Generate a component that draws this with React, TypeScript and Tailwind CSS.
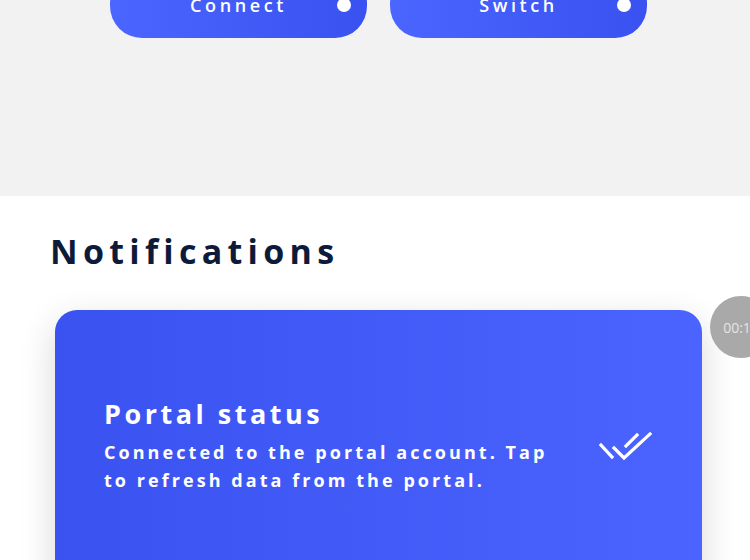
import React from "react";

const font = { fontFamily: '"Open Sans", "Noto Sans", sans-serif' };

const PillButton = ({ label }: { label: string }) => (
  <button className="relative flex h-[66px] w-[257px] items-center justify-center rounded-[32px] bg-linear-to-r from-[#4b66ff] to-[#3951f0] text-[18px] font-semibold tracking-[0.2em] text-white">
    {label}
    <span className="absolute right-[16px] top-1/2 h-[14px] w-[14px] -translate-y-1/2 rounded-full bg-white" />
  </button>
);

const DoubleCheck = () => (
  <svg width="58" height="34" viewBox="0 0 58 34" fill="none" stroke="white" strokeWidth="3.2" strokeLinecap="square">
    <path d="M5 16 L16 28" />
    <path d="M18 19 L28 29 L54 5" />
    <path d="M30 17 L41 6" />
  </svg>
);

export default function App() {
  return (
    <div className="relative h-[560px] w-[750px] overflow-hidden bg-white" style={font}>
      <section className="flow-root h-[196px] bg-[#f2f2f2]">
        <div className="-mt-[28px] flex gap-[23px] pl-[110px]">
          <PillButton label="Connect" />
          <PillButton label="Switch" />
        </div>
      </section>

      <section className="px-[50px] pt-[33px]">
        <h2 className="text-[34px] font-bold leading-[44px] tracking-[0.155em] text-[#0d1b3a]">
          Notifications
        </h2>

        <div className="ml-[5px] mt-[37px] flex h-[300px] w-[647px] items-start rounded-[22px] bg-linear-to-r from-[#3a52f0] to-[#4b64ff] pl-[49px] pr-[48px] pt-[85px] shadow-[0_12px_36px_rgba(0,0,0,0.16)]">
          <div className="w-[470px] text-white">
            <h3 className="text-[27px] font-bold leading-[38px] tracking-[0.13em]">
              Portal status
            </h3>
            <p className="mt-[5px] text-[18px] font-bold leading-[28px] tracking-[0.17em]">
              Connected to the portal account. Tap to refresh data from the portal.
            </p>
          </div>
          <div className="ml-auto mt-[34px]">
            <DoubleCheck />
          </div>
        </div>
      </section>

      <div className="absolute left-[710px] top-[296px] flex h-[62px] w-[62px] items-center justify-center rounded-full bg-[#a9a9a9] text-[14px] text-[#e4e4e4]">
        00:10
      </div>
    </div>
  );
}
